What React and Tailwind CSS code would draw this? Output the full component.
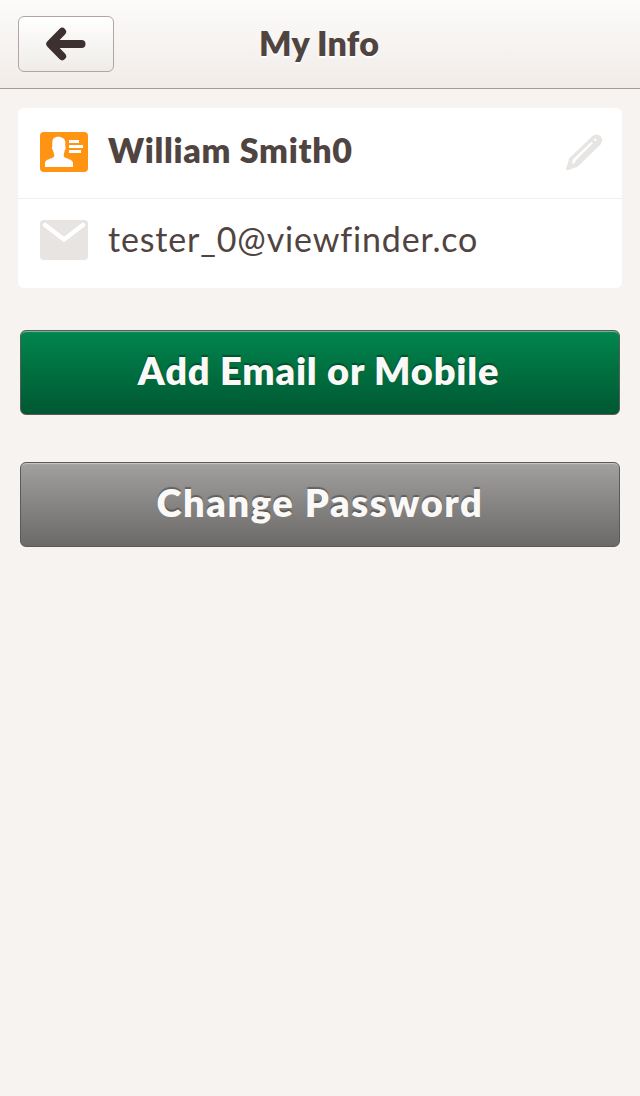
function BackArrow() {
  return (
    <svg width="40" height="34" viewBox="0 0 40 34" fill="none" stroke="#3d3030" strokeLinecap="round" strokeLinejoin="round">
      <path d="M16.200 4.700 4.200 17 16.200 29.300" strokeWidth="7.8" />
      <path d="M6 17H35.500" strokeWidth="8" />
    </svg>
  );
}

function ContactIcon() {
  return (
    <svg width="48" height="40" viewBox="0 0 48 40" className="shrink-0">
      <rect width="48" height="40" rx="4" fill="#ff9413" />
      <path
        d="M18.200 4.800c-4 0-5.900 2.200-5.900 5.700v4c-.7.500-.5 2.600.5 3.500.4 2.200 1.400 3.500 1.400 4.500v2C12.500 26.700 5 27.200 5 31V35h28v-4c0-3.800-7.500-4.300-9.200-6.500v-2c0-1 .6-2.300 1-4.500 1-.9 1.200-3 .5-3.500v-4c0-3.500-3.100-5.700-7.100-5.700z"
        fill="#fff"
      />
      <path d="M29 8h10v3H29zM29 13h14v3H29zM29 18h12v3H29z" fill="#fff" />
    </svg>
  );
}

function MailIcon() {
  return (
    <svg width="48" height="40" viewBox="0 0 48 40" className="shrink-0">
      <rect width="48" height="40" rx="4" fill="#e7e4e2" />
      <path d="M5 5 24 19.500 43 5" fill="none" stroke="#fff" strokeWidth="4.500" strokeLinecap="round" />
    </svg>
  );
}

function PencilIcon() {
  return (
    <svg width="38" height="38" viewBox="0 0 38 38" className="shrink-0">
      <path
        d="M1 36.200 4.300 25.300 27.300 3.200a6 6 0 0 1 8.200 0a6 6 0 0 1 0 8.200L12.600 33.700 2.400 37.200Q.8 37.500 1 36.200Z"
        fill="#e7e4e2"
      />
      <path d="M7.600 26.800 26.200 9Q27.700 8.800 27.800 10.200L10.600 27.500 9.700 30 7.200 30.800Z" fill="#fff" />
      <circle cx="30.200" cy="6.800" r="1.300" fill="#fff" />
    </svg>
  );
}

export default function App() {
  return (
    <div className="flex h-[1096px] w-[640px] flex-col bg-[#f7f3f0] font-['Lato',sans-serif] text-[#504441]">
      <header className="grid h-[89px] shrink-0 grid-cols-[96px_1fr_96px] border-b border-[#a39b98] bg-linear-to-b from-[#fcfbfa] to-[#f1ece8] px-[18px]">
        <button
          aria-label="Back"
          className="mt-4 flex h-14 w-24 items-center justify-center rounded-md border border-[#b1a6a3] bg-linear-to-b from-white to-[#efece8] pr-px"
        >
          <BackArrow />
        </button>
        <h1 className="flex items-center justify-center pr-[2px] pb-1 text-[34px] font-extrabold tracking-[0.2px] whitespace-nowrap [text-shadow:0_2px_0_#fff]">
          <span>My Info</span>
        </h1>
      </header>

      <main className="flex flex-col px-[18px] pt-[19px]">
        <section className="flex h-[180px] flex-col rounded-md bg-white">
          <div className="flex h-[91px] items-center border-b border-[#f1f0ef] pr-[19px] pb-[2px] pl-[22px]">
            <ContactIcon />
            <span className="ml-5 flex-1 pb-1 text-[34px] leading-10 font-extrabold tracking-[0.7px] whitespace-nowrap">William Smith0</span>
            <PencilIcon />
          </div>
          <div className="flex h-[89px] items-center pb-[7px] pl-[22px]">
            <MailIcon />
            <span className="ml-5 pb-0.5 text-[34px] leading-10 tracking-[0.85px] whitespace-nowrap">tester_0@viewfinder.co</span>
          </div>
        </section>

        <div className="mt-[42px] flex flex-col gap-[47px] px-[2px] text-[38px] font-extrabold text-[#faf9f7]">
          <button className="flex h-[85px] items-center justify-center rounded-md border border-[#5c5a58] bg-linear-to-b from-[#00864e] to-[#005832] pr-[3px] pb-1 tracking-[0.8px] whitespace-nowrap shadow-[inset_0_2px_1px_-1px_#7fb99c] [text-shadow:0_-2px_1px_#00000050]">
            <span>Add Email or Mobile</span>
          </button>
          <button className="flex h-[85px] items-center justify-center rounded-md border border-[#5c5a58] bg-linear-to-b from-[#a2a19f] to-[#6c6969] pb-1 tracking-[1.6px] whitespace-nowrap shadow-[inset_0_2px_1px_-1px_#c8c8c6] [text-shadow:0_-2px_1px_#00000050]">
            <span>Change Password</span>
          </button>
        </div>
      </main>
    </div>
  );
}
